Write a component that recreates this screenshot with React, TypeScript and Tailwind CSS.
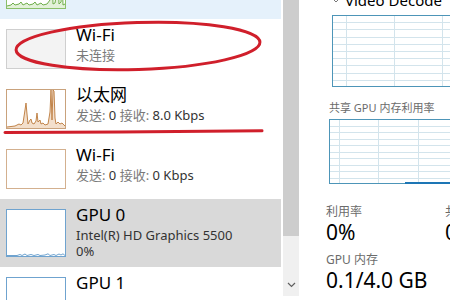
import React from 'react';

type ItemProps = {
  title: string;
  lines: React.ReactNode[];
  thumbClass: string;
  graph?: React.ReactNode;
  className?: string;
  tall?: boolean;
};

const ListItem = ({ title, lines, thumbClass, graph, className, tall }: ItemProps) => (
  <div className={`flex w-[281px] gap-[10px] pl-[6px] pt-[10px] ${tall ? 'h-[68px]' : 'h-[60px]'} ${className ?? ''}`}>
    <div className={`shrink-0 w-[60px] border ${tall ? 'h-[48px]' : 'h-[40px]'} ${thumbClass}`}>{graph}</div>
    <div className="-mt-[5px] min-w-0 whitespace-nowrap">
      <div className="text-[17px] leading-[22px] text-black">{title}</div>
      <div className="mt-[1px] text-[13px] leading-[16px] text-[#333]">
        {lines.map((l, i) => (
          <div key={i}>{l}</div>
        ))}
      </div>
    </div>
  </div>
);

const Gray = ({ children }: { children: React.ReactNode }) => <span className="text-[#7a7a7a]">{children}</span>;

const Spark = ({ points, stroke, fill }: { points: string; stroke: string; fill: string }) => (
  <svg className="block h-full w-full" viewBox="0 0 58 38" preserveAspectRatio="none">
    <polygon points={`0,38 ${points} 58,38`} fill={fill} />
    <polyline points={points} fill="none" stroke={stroke} strokeWidth={1} />
  </svg>
);

const GridGraph = ({ w, h, cols, rows, children }: { w: number; h: number; cols: number[]; rows: number; children?: React.ReactNode }) => (
  <svg width={w} height={h} className="block">
    <rect x={0} y={0} width={w} height={h} fill="white" />
    {cols.map((x) => (
      <line key={x} x1={x + 0.5} y1={0} x2={x + 0.5} y2={h} stroke="#d3e4ec" />
    ))}
    {Array.from({ length: rows - 1 }).map((_, i) => {
      const y = Math.round(((i + 1) * h) / rows) + 0.5;
      return <line key={i} x1={0} y1={y} x2={w} y2={y} stroke="#d3e4ec" />;
    })}
    <rect x={0.5} y={0.5} width={w - 1} height={h - 1} fill="none" stroke="#4d95b8" />
    {children}
  </svg>
);

export default function App() {
  return (
    <div className="relative flex h-[300px] w-[450px] overflow-hidden bg-white font-['Noto_Sans','Noto_Sans_CJK_SC',sans-serif]">
      {/* left list, scrolled */}
      <div className="w-[283px] shrink-0 overflow-hidden">
        <div className="-mt-[41px]">
          <ListItem
            title="磁盘 0 (C:)"
            lines={['0%']}
            className="bg-[#e5f1fb]"
            thumbClass="border-[#8bbf6a] bg-white"
            graph={
              <Spark
                stroke="#6fae4a"
                fill="#e3f1d9"
                points="0,36 4,35 6,33 8,35 12,34 14,32 16,35 20,33 22,35 26,34 28,32 30,35 34,33 36,35 40,34 43,30 45,2 46,34 48,33 50,20 51,0 52,34 54,32 55,3 56,35 58,34"
              />
            }
          />
          <ListItem title="Wi-Fi" lines={[<Gray>未连接</Gray>]} thumbClass="border-[#cfcfcf] bg-[#f3f3f3]" />
          <ListItem
            title="以太网"
            lines={[
              <>
                <Gray>发送:</Gray> 0 <Gray>接收:</Gray> 8.0 Kbps
              </>,
            ]}
            thumbClass="border-[#c9a27c] bg-white"
            graph={
              <Spark
                stroke="#c1844a"
                fill="#f3dfcc"
                points="0,37 8,36 12,34 14,35 16,33 18,20 19,13 20,24 21,34 23,30 24,29 25,33 27,34 29,31 30,23 31,32 33,30 34,34 36,33 38,35 41,34 43,22 44,0 45,30 46,0 47,1 48,28 49,34 51,32 53,34 55,33 58,36"
              />
            }
          />
          <ListItem
            title="Wi-Fi"
            lines={[
              <>
                <Gray>发送:</Gray> 0 <Gray>接收:</Gray> 0 Kbps
              </>,
            ]}
            thumbClass="border-[#d3b08f] bg-white"
          />
          <ListItem
            tall
            title="GPU 0"
            lines={['Intel(R) HD Graphics 5500', '0%']}
            className="bg-[#d9d9d9]"
            thumbClass="border-[#6fa3cf] bg-white"
            graph={
              <svg className="block h-full w-full" viewBox="0 0 58 46" preserveAspectRatio="none">
                <polyline
                  points="0,45.5 10,45.5 13,44.5 15,45.5 18,44 20,45.5 24,44.5 27,45.5 31,44.5 33,45.5 38,45 41,43.8 43,45.5 47,44.5 49,45.5 52,44 54,45 56,43.8 58,45.5"
                  fill="none"
                  stroke="#6fa3cf"
                  strokeWidth={1}
                />
              </svg>
            }
          />
          <ListItem tall title="GPU 1" lines={[]} thumbClass="border-[#6fa3cf] bg-white" />
        </div>
      </div>

      {/* scrollbar */}
      <div className="flex w-[16px] shrink-0 flex-col">
        <div className="h-[236px] bg-[#cdcdcd]" />
        <div className="flex h-[60px] items-end justify-center bg-[#f0f0f0] pb-[8px]">
          <svg width={9} height={6} viewBox="0 0 9 6">
            <path d="M1 1 L4.5 4.5 L8 1" fill="none" stroke="#606060" strokeWidth={1.2} />
          </svg>
        </div>
      </div>

      {/* right detail panel */}
      <div className="min-w-0 flex-1 overflow-hidden">
        <div className="-mt-[12px] flex h-[24px] items-center gap-[6px] whitespace-nowrap pl-[34px] text-[15px] leading-[24px] text-black">
          <svg width={6} height={4} viewBox="0 0 6 4" className="mb-[9px] self-end">
            <path d="M0.5 0.5 L3 3 L5.5 0.5" fill="none" stroke="#777" strokeWidth={1} />
          </svg>
          <span>Video Decode</span>
        </div>
        <div className="mt-[3px] ml-[33px]">
          <GridGraph w={140} h={72} cols={[14, 62, 110]} rows={10} />
        </div>
        <div className="mt-[14px] ml-[30px] whitespace-nowrap text-[11px] leading-[14px] text-[#6b6b6b]">共享 GPU 内存利用率</div>
        <div className="mt-[4px] ml-[30px]">
          <GridGraph w={140} h={65} cols={[10, 49, 89]} rows={10}>
            <line x1={76} y1={64} x2={140} y2={64} stroke="#1d76b5" strokeWidth={2} />
          </GridGraph>
        </div>
        <div className="mt-[20px] ml-[27px] grid w-[260px] grid-cols-[119px_1fr] whitespace-nowrap">
          <div>
            <div className="text-[12px] leading-[16px] text-[#6b6b6b]">利用率</div>
            <div className="text-[21px] leading-[24px] text-black">0%</div>
            <div className="mt-[8px] text-[12px] leading-[16px] text-[#6b6b6b]">GPU 内存</div>
            <div className="text-[21px] leading-[24px] text-black">0.1/4.0 GB</div>
          </div>
          <div>
            <div className="text-[12px] leading-[16px] text-[#6b6b6b]">共享 GPU 内存</div>
            <div className="text-[21px] leading-[24px] text-black">0.1/2.0 GB</div>
          </div>
        </div>
      </div>

      {/* red hand-drawn annotations */}
      <svg className="pointer-events-none absolute inset-0" width={450} height={300}>
        <ellipse cx={138} cy={46} rx={122} ry={23.5} transform="rotate(-1.8 138 46)" fill="none" stroke="#d01f2b" strokeWidth={3} />
        <path d="M5 132.5 L120 132 L262 130.8" fill="none" stroke="#d01f2b" strokeWidth={3} strokeLinecap="round" />
      </svg>
    </div>
  );
}
